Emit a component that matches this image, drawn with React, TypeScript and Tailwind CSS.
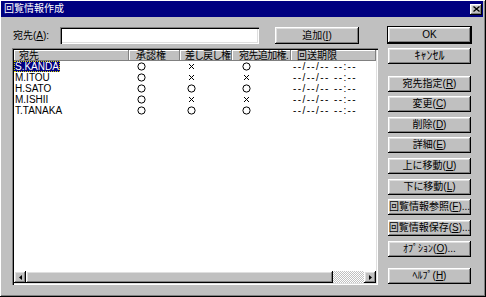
import React from 'react';

const raised = 'shadow-[inset_-1px_-1px_#000,inset_1px_1px_#fff,inset_-2px_-2px_#808080,inset_2px_2px_#dfdfdf]';

const Mark = ({ kind }: { kind: string }) =>
    kind === 'o' ? (
        <svg width="9" height="9" viewBox="0 0 9 9" className="block">
            <circle cx="4.5" cy="4.5" r="3.6" fill="none" stroke="#000" strokeWidth="1" />
        </svg>
    ) : (
        <svg width="9" height="9" viewBox="0 0 9 9" className="block">
            <path d="M2 2L7 7M7 2L2 7" stroke="#000" strokeWidth="1" />
        </svg>
    );

const Btn = ({ children, mt = '', isDefault = false }: { children: React.ReactNode; mt?: string; isDefault?: boolean }) => (
    <div
        className={`flex h-[16px] w-[83px] shrink-0 items-center justify-center bg-[#c0c0c0] text-[10px] leading-none text-black ${raised} ${mt} ${isDefault ? 'outline outline-1 outline-black' : ''}`}
    >
        {children}
    </div>
);

const rows = [
    { name: 'S.KANDA', a: 'o', b: 'x', c: 'o' },
    { name: 'M.ITOU', a: 'o', b: 'x', c: 'x' },
    { name: 'H.SATO', a: 'o', b: 'o', c: 'o' },
    { name: 'M.ISHII', a: 'o', b: 'x', c: 'x' },
    { name: 'T.TANAKA', a: 'o', b: 'o', c: 'o' },
];

const headerCell = 'flex h-full shrink-0 items-center overflow-hidden whitespace-nowrap shadow-[inset_-1px_-1px_#808080,inset_1px_1px_#fff]';

export default function App() {
    return (
        <div className="font-[family-name:'Liberation_Sans','Noto_Sans_CJK_JP',sans-serif] flex h-[297px] w-[486px] flex-col bg-[#c0c0c0] pb-[2px] pl-[1px] pr-[3px] pt-[1px] text-black shadow-[inset_-1px_-1px_#000,inset_1px_1px_#fff,inset_-2px_-2px_#808080]">
            {/* title bar */}
            <div className="flex h-[16px] shrink-0 items-center justify-between bg-[#000080] pl-[3px] pr-[1px]">
                <span className="text-[10px] leading-none text-white">回覧情報作成</span>
                <div className={`flex h-[11px] w-[12px] items-center justify-center bg-[#c0c0c0] ${raised}`}>
                    <svg width="7" height="6" viewBox="0 0 7 6">
                        <path d="M0.5 0.5L6.5 5.5M6.5 0.5L0.5 5.5" stroke="#000" strokeWidth="1.3" />
                    </svg>
                </div>
            </div>

            <div className="flex pl-[11px] pt-[10px]">
                {/* left side */}
                <div className="flex w-[366px] flex-col">
                    <div className="flex h-[17px] items-center">
                        <span className="w-[48px] pl-[1px] text-[10px] leading-none">
                            宛先(<u>A</u>):
                        </span>
                        <div className="h-[17px] w-[199px] bg-white shadow-[inset_1px_1px_#808080,inset_2px_2px_#000,inset_-1px_-1px_#fff,inset_-2px_-2px_#dfdfdf]" />
                        <div className={`ml-[16px] flex h-[17px] w-[84px] items-center justify-center text-[10px] leading-none ${raised}`}>
                            追加(<u>I</u>)
                        </div>
                    </div>

                    {/* list view */}
                    <div className="mt-[4px] flex h-[237px] flex-col bg-white p-[2px] shadow-[inset_1px_1px_#808080,inset_2px_2px_#000,inset_-1px_-1px_#fff,inset_-2px_-2px_#dfdfdf]">
                        <div className="flex h-[11px] shrink-0 bg-[#c0c0c0] text-[10px] leading-none">
                            <div className={`${headerCell} w-[115px] pl-[5px]`}>宛先</div>
                            <div className={`${headerCell} w-[51px] pl-[7px]`}>承認権</div>
                            <div className={`${headerCell} w-[52px] pl-[5px] tracking-[-1px]`}>差し戻し権</div>
                            <div className={`${headerCell} w-[59px] pl-[7px] tracking-[-0.6px]`}>宛先追加権.</div>
                            <div className={`${headerCell} flex-1 pl-[6px]`}>回送期限</div>
                        </div>

                        <div className="flex-1">
                            {rows.map((r, i) => (
                                <div key={r.name} className="flex h-[11px] items-center text-[10px] leading-none">
                                    <div className="w-[115px]">
                                        <span
                                            className={`inline-block h-[11px] pl-[1px] pr-[1px] leading-[11px] ${i === 0 ? 'bg-[#000080] text-white outline outline-1 -outline-offset-1 outline-dotted outline-[#d8d800]' : ''}`}
                                        >
                                            {r.name}
                                        </span>
                                    </div>
                                    <div className="w-[51px] pl-[8px]"><Mark kind={r.a} /></div>
                                    <div className="w-[52px] pl-[7px]"><Mark kind={r.b} /></div>
                                    <div className="w-[59px] pl-[10px]"><Mark kind={r.c} /></div>
                                    <div className="pl-[2px] tracking-[1.4px]">--/--/-- --:--</div>
                                </div>
                            ))}
                        </div>

                        {/* horizontal scrollbar */}
                        <div className="flex h-[12px] shrink-0 bg-[#c0c0c0]">
                            <div className={`flex w-[12px] items-center justify-center ${raised}`}>
                                <svg width="3" height="5" viewBox="0 0 3 5"><path d="M3 0V5L0 2.5Z" fill="#000" /></svg>
                            </div>
                            <div className={`w-[307px] ${raised}`} />
                            <div className="flex-1 bg-[repeating-conic-gradient(#c0c0c0_0_25%,#fff_0_50%)] bg-[length:2px_2px]" />
                            <div className={`flex w-[12px] items-center justify-center ${raised}`}>
                                <svg width="3" height="5" viewBox="0 0 3 5"><path d="M0 0V5L3 2.5Z" fill="#000" /></svg>
                            </div>
                        </div>
                    </div>
                </div>

                {/* right buttons */}
                <div className="ml-[10px] flex flex-col">
                    <Btn isDefault>OK</Btn>
                    <Btn mt="mt-[5px]"><span className="text-[12px]">ｷｬﾝｾﾙ</span></Btn>
                    <Btn mt="mt-[12px]">宛先指定(<u>R</u>)</Btn>
                    <Btn mt="mt-[4px]">変更(<u>C</u>)</Btn>
                    <Btn mt="mt-[5px]">削除(<u>D</u>)</Btn>
                    <Btn mt="mt-[4px]">詳細(<u>E</u>)</Btn>
                    <Btn mt="mt-[5px]">上に移動(<u>U</u>)</Btn>
                    <Btn mt="mt-[5px]">下に移動(<u>L</u>)</Btn>
                    <Btn mt="mt-[4px]">回覧情報参照(<u>F</u>)...</Btn>
                    <Btn mt="mt-[5px]">回覧情報保存(<u>S</u>)...</Btn>
                    <Btn mt="mt-[5px]">ｵﾌﾟｼｮﾝ(<u>O</u>)...</Btn>
                    <Btn mt="mt-[11px]">ﾍﾙﾌﾟ(<u>H</u>)</Btn>
                </div>
            </div>
        </div>
    );
}
